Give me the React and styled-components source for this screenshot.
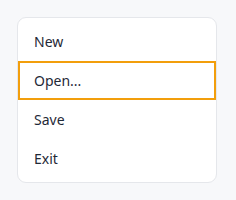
import React from "react";
import styled, { createGlobalStyle } from "styled-components";

const GlobalStyle = createGlobalStyle`
  html, body {
    margin: 0;
    padding: 0;
    background: #f7f8fa;
  }
  body {
    font-family: "Noto Sans", "Open Sans", sans-serif;
  }
`;

const Page = styled.div`
  width: 236px;
  height: 200px;
  padding: 17px 0 0 17px;
  box-sizing: border-box;
`;

const Menu = styled.ul`
  list-style: none;
  margin: 0;
  width: 200px;
  box-sizing: border-box;
  padding: 4px 0;
  background: #ffffff;
  border: 1px solid #e5e7eb;
  border-radius: 9px;
`;

const Item = styled.li`
  height: 39px;
  display: flex;
  align-items: center;
  padding: 0 16px;
  font-size: 14px;
  color: #1f2937;
  box-shadow: ${(p) => (p.$focused ? "inset 0 0 0 2px #f29e0c" : "none")};
  cursor: pointer;
`;

const items = ["New", "Open...", "Save", "Exit"];

const App = () => {
  return (
    <>
      <GlobalStyle />
      <Page>
        <Menu>
          {items.map((label) => (
            <Item key={label} $focused={label === "Open..."}>
              {label}
            </Item>
          ))}
        </Menu>
      </Page>
    </>
  );
};

export default App;
